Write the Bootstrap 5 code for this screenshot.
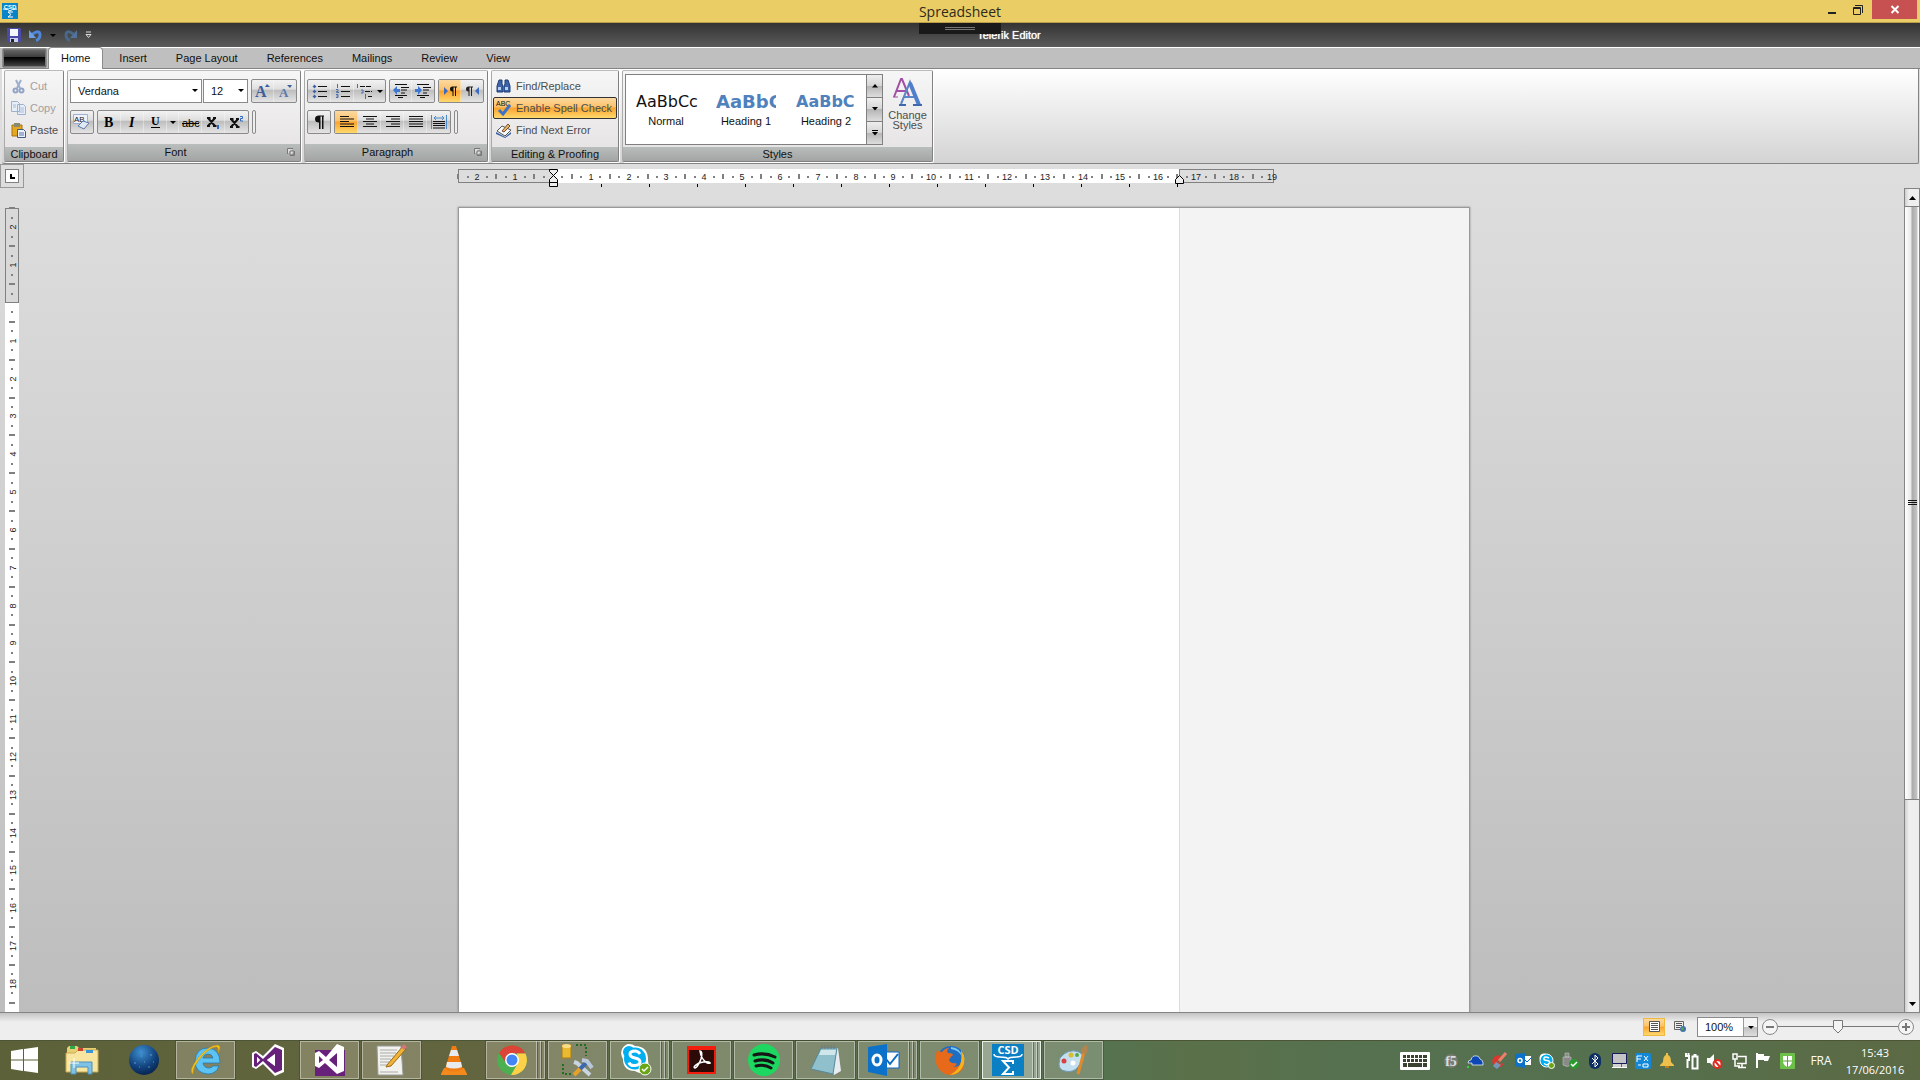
<!DOCTYPE html>
<html lang="en">
<head>
<meta charset="utf-8">
<meta name="viewport" content="width=device-width, initial-scale=1">
<title>Spreadsheet</title>
<link href="https://cdn.jsdelivr.net/npm/bootstrap@5.3.0/dist/css/bootstrap.min.css" rel="stylesheet">
<style>
  body { height: 100vh; overflow: hidden; font: 11px/16px "Liberation Sans", Arial, sans-serif; color: #111; background: #ddd; }
  body > * { flex-shrink: 0; }
  button { font: inherit; color: inherit; background: none; border: 0; padding: 0; }
  svg { display: block; flex: none; overflow: visible; }

  /* window title */
  .win-title { height: 23px; background: #ebcd66; border-bottom: 1px solid #b99d4a; }
  .win-title h1 { font: 14px/23px "Open Sans", sans-serif; color: #2e2a1c; margin: 0; }
  .win-icon { left: 2px; top: 3px; }
  .win-ctl { top: 0; right: 3px; height: 19px; }
  .win-ctl button { width: 26px; height: 19px; display: flex; align-items: center; justify-content: center; }
  .win-ctl .x-btn { width: 45px; background: #c75050; margin-left: 1px; }
  .pull-tab { top: 23px; left: 50%; width: 82px; height: 11px; background: #1a1a1a; transform: translateX(-50%); z-index: 5; }
  .pull-tab::after { content: ""; display: block; width: 30px; height: 3px; margin: 4px auto 0; border: solid #777; border-width: 1px 0; }

  /* quick access */
  .quick { height: 25px; background: linear-gradient(#333, #5c5c5c); border-bottom: 1px solid #fff; padding-left: 7px; }
  .quick .doc-name { color: #fff; left: 0; right: 0; padding-left: 98px; text-shadow: 0 0 1px #fff; }

  /* tabs */
  .tabs { height: 21px; background: #bfbfbf; border-bottom: 1px solid #848484; padding-left: 2px; }
  .app-btn { width: 45px; height: 20px; margin-right: 2px; border: 1px solid #8f8f8f; border-radius: 2px; outline: 1px solid #777; outline-offset: -2px; background: linear-gradient(#6b6b6b 0, #3c3c3c 45%, #000 46%, #111 60%, #4a4a4a 100%); }
  .tabs .nav-link { color: #111; padding: 2px 12px 0; height: 20px; margin-right: 5px; line-height: 16px; }
  .tabs .nav-link.active { height: 21px; background: #fff; border-radius: 3px 3px 0 0; box-shadow: 0 0 0 1px #8c8c8c; clip-path: inset(-1px -1px 0 -1px); }

  /* ribbon */
  .ribbon { height: 95px; margin: 0 1px 0 2px; padding: 1px 0 1px 2px; gap: 2px; border: solid #848484; border-width: 0 1px 1px 0; background: linear-gradient(#fff, #d3d3d3); border-radius: 0 0 2px 2px; }
  .grp { height: 92px; border: 1px solid #aaa; border-color: #bbb #808080 #808080 #aaa; border-radius: 2px; box-shadow: 1px 1px 0 #fff; background: linear-gradient(#f6f6f6, #e4e1e2); margin-right: 1px; }
  .g-clip { width: 60px; } .g-font { width: 234px; } .g-para { width: 184px; } .g-proof { width: 128px; } .g-styles { width: 311px; }
  .grp footer { height: 17px; line-height: 17px; background: linear-gradient(#b9bdbb, #a2a5a3); text-align: center; }
  .grp footer.slim { height: 14px; line-height: 14px; }
  .grp footer.has-dialog { padding-right: 17px; }
  .grp footer button { right: 5px; top: 4px; }
  .two-rows { padding: 8px 2px 0 2px; gap: 7px; }
  .tools { gap: 3px; }
  .strip { height: 24px; border: 1px solid #8a8a8a; border-radius: 2px; display: flex; background: linear-gradient(#f2f2f2 0, #dedede 42%, #bdbdbd 46%, #e4e4e4 100%); }
  .strip button { width: 23px; height: 22px; display: flex; align-items: center; justify-content: center; }
  .strip button + button { box-shadow: -1px 0 0 rgba(255,255,255,.35); }
  .strip .wide { width: 31px; }
  .strip .thin { width: 12px; }
  .strip.mono button { width: 22px; }
  .lit { background: linear-gradient(#fbd9a0 0, #fcc26a 45%, #fba32e 50%, #fed86e 100%); }
  .grip { width: 4px; height: 24px; border: 1px solid #8a8a8a; border-radius: 2px; background: #eee; }
  .combo { position: relative; height: 24px; }
  .combo select { width: 100%; height: 100%; appearance: none; border: 1px solid #8a8a8a; border-radius: 0; background: #fff; font: inherit; color: #111; padding: 0 0 0 7px; }
  .combo::after, .tri { content: ""; border: solid transparent; border-width: 3px 3px 0; border-top-color: #000; width: 0; height: 0; }
  .combo::after { position: absolute; right: 4px; top: 10px; pointer-events: none; }
  .combos { gap: 1px; }
  .w-face { width: 132px; } .w-size { width: 45px; }
  .row-btn { height: 22px; display: flex; align-items: center; color: #4d4d4d; text-align: left; border: 1px solid transparent; border-radius: 2px; white-space: nowrap; gap: 5px; }
  .row-btn:disabled { color: #a0a0a0; }
  .row-btn.lit { border-color: #333; }
  .g-clip .row-btn { padding-left: 5px; gap: 4px; }
  .g-proof .row-btn { padding-left: 2px; width: 124px; }

  .styles-body { padding: 3px 0 0 2px; }
  .gallery { height: 71px; border: 1px solid #808080; background: #fff; }
  .gallery .swatch { width: 80px; height: 69px; padding: 0 10px; text-align: center; overflow: hidden; }
  .swatch span { display: block; height: 22px; line-height: 22px; white-space: nowrap; font-family: "DejaVu Sans", sans-serif; color: #4f81bd; text-align: left; }
  .swatch .nm { display: block; font-weight: 400; }
  .swatch .s-body { color: #111; font-size: 16px; }
  .swatch .s-h1 { font-weight: 700; font-size: 18px; overflow: hidden; }
  .swatch .s-h2 { font-weight: 700; font-size: 16px; }
  .gal-nav button { width: 16px; flex: 1; display: flex; align-items: center; justify-content: center; border: solid #808080; border-width: 0 0 1px 1px; background: linear-gradient(#eee, #d5d5d5 48%, #b5b5b5 50%, #ddd); }
  .gal-nav button:last-child { border-bottom: 0; }
  .change { width: 49px; padding-top: 4px; line-height: 10px; color: #4d4d4d; }

  /* document */
  .work { flex: 1 1 0; background: linear-gradient(#dedede, #bdbdbd); border-bottom: 1px solid #848484; min-height: 0; }
  .corner { width: 24px; height: 24px; border: 1px solid #999; padding: 4px; }
  .corner i { display: block; width: 14px; height: 14px; border: 1px solid #808080; background: #fff; padding: 4px 0 0 4px; }
  .corner i::before { content: ""; display: block; width: 5px; height: 5px; border: solid #000; border-width: 0 0 2px 2px; }
  .bar-gap { width: 16px; }
  .sheet-w { width: 1012px; flex: none; }
  .v-ruler { width: 24px; overflow: hidden; padding: 20px 0 0 5px; }
  .sheet { border: solid #999; border-width: 1px 1px 0; background: #fff; box-shadow: 0 0 2px #888; margin-top: 19px; }
  .sheet-side { width: 290px; background: #f3f3f3; border-left: 1px solid #ddd; }
  .ruler text { font: 9px "Liberation Sans", Arial, sans-serif; fill: #222; text-anchor: middle; }
  .scroll { width: 16px; background: linear-gradient(90deg, #d0d0d0, #efefef 4px); border: solid #848484; border-width: 1px 1px 0; }
  .scroll button { height: 17px; display: flex; align-items: center; justify-content: center; }
  .thumb { flex: 593 0 0; border: solid #808080; border-width: 1px 0; background: linear-gradient(90deg, #fff 0, #e8e8e8 6px, #aaa 7px, #c5c5c5 12px, #fff 13px); }
  .thumb svg { margin: auto; }
  .rest { flex: 196 0 0; }

  /* status bar */
  .status { height: 27px; background: linear-gradient(#c4c4c4, #eee 9px); padding-right: 6px; }
  .view-btns { gap: 4px; margin-right: 6px; }
  .view-btn { width: 22px; height: 18px; display: flex; align-items: center; justify-content: center; }
  .view-btn.lit { border: 1px solid #f0b83c; }
  .zoom-box { width: 61px; height: 20px; }
  .zoom-box::before { content: ""; position: absolute; right: 1px; top: 1px; width: 14px; height: 18px; border-left: 1px solid #999; background: linear-gradient(#f5f5f5 48%, #c0c0c0 50%, #ddd); pointer-events: none; }
  .zoom-box::after { top: 9px; }
  .slide { appearance: none; width: 120px; height: 16px; margin: 0; background: linear-gradient(#777, #777) center/100% 1px no-repeat; }
  .slide::-webkit-slider-thumb { appearance: none; width: 10px; height: 14px; background: url("data:image/svg+xml,%3Csvg xmlns='http://www.w3.org/2000/svg' width='10' height='14'%3E%3Cpath d='M.5 .5h9v8L5 13 .5 8.500z' fill='%23f4f4f4' stroke='%23777'/%3E%3C/svg%3E") no-repeat; }

  /* taskbar */
  .task { height: 40px; border-top: 1px solid #4c5636; color: #fff; background: linear-gradient(90deg, #5c6139 0, #61653e 18%, #62653f 26%, #5b6c49 34%, #5a6f4e 50%, #557351 57%, #5a7049 62%, #567150 70%, #55704e 84%, #5c6a44 100%); }
  .task a, .task .start { height: 38px; width: 59px; display: flex; align-items: center; justify-content: center; color: #fff; text-decoration: none; }
  .task .start { width: 49px; }
  .apps { gap: 3px; padding-left: 3px; }
  .apps .run { border: 1px solid rgba(255,255,255,.4); background: rgba(235,225,210,.25); box-shadow: 0 0 0 1px rgba(40,50,25,.3); }
  .apps .multi { padding-right: 8px; background-image: linear-gradient(90deg, transparent 49px, rgba(255,255,255,.45) 49px 50px, rgba(50,60,30,.5) 50px 51px, transparent 51px 53px, rgba(255,255,255,.45) 53px 54px, rgba(50,60,30,.5) 54px 55px, transparent 55px); }
  .apps .now { background-color: rgba(255,255,255,.38); border-color: #e9eee6; }
  .tray { font: 11px/17px "Open Sans", sans-serif; padding-right: 13px; }
  .tray .cell { width: 24px; display: flex; justify-content: center; }
  .tray .kb { width: 30px; margin-right: 9px; }
  .tray .lang { width: 44px; text-align: center; font-size: 12px; }
  .tray .clock { width: 64px; text-align: center; }
</style>
</head>
<body class="d-flex flex-column m-0">

<header class="win-title position-relative text-center">
  <svg class="win-icon position-absolute" width="16" height="16"><rect width="16" height="16" fill="#0a84c8"/><text x="8" y="5.500" font-family="Liberation Sans" font-size="6" font-weight="700" fill="#fff" text-anchor="middle">CSD</text><path d="M1 6q6 0 7 2 1-2 7-2M11 9H6l3 2.500L6 14h5" stroke="#fff" fill="none"/></svg>
  <h1>Spreadsheet</h1>
  <div class="win-ctl position-absolute d-flex">
    <button aria-label="Minimize"><svg width="8" height="8"><path d="M0 7h8" stroke="#222" stroke-width="2"/></svg></button>
    <button aria-label="Restore"><svg width="10" height="10"><path d="M.5 2.500h7v7h-7zM.5 3.500h7M2 .5h7.500V8" stroke="#222" fill="none"/></svg></button>
    <button aria-label="Close" class="x-btn"><svg width="8" height="7"><path d="M.5 0l7 7m0-7l-7 7" stroke="#fff" stroke-width="2"/></svg></button>
  </div>
</header>
<div class="pull-tab position-absolute"></div>

<div class="quick d-flex align-items-center position-relative">
  <div class="doc-name position-absolute text-center">Telerik Editor</div>
  <button aria-label="Save" class="position-relative"><svg width="14" height="14"><path d="M0 0h13l1 1v13H0z" fill="#4a4aa8"/><path d="M3 1h8v7H3z" fill="#f4f6ff"/><path d="M3 10h8v4H3z" fill="#c9cdf0"/><path d="M4 11h3v3H4z" fill="#222"/></svg></button>
  <button aria-label="Undo" class="position-relative ms-2"><svg width="13" height="13"><path d="M3 5.500Q11 0 11 6q0 4-4 5.500" stroke="#4f86d8" stroke-width="3" fill="none"/><path d="M0 1v8h7z" fill="#6d9fe6"/></svg></button>
  <button aria-label="Undo list" class="position-relative tri ms-2"></button>
  <button aria-label="Redo" class="position-relative ms-2"><svg width="13" height="13"><path d="M10 5.500Q2 0 2 6q0 4 4 5.500" stroke="#496788" stroke-width="3" fill="none"/><path d="M13 1v8H6z" fill="#51739b"/></svg></button>
  <button aria-label="Customize" class="position-relative ms-2"><svg width="7" height="8"><path d="M1 1h5M1 3.500h5L3.500 6.500z" stroke="#ddd" fill="none"/></svg></button>
</div>

<nav class="tabs nav flex-nowrap">
  <button class="app-btn" aria-label="Application menu"></button>
  <a class="nav-link active" href="#">Home</a><a class="nav-link" href="#">Insert</a><a class="nav-link" href="#">Page Layout</a><a class="nav-link" href="#">References</a><a class="nav-link" href="#">Mailings</a><a class="nav-link" href="#">Review</a><a class="nav-link" href="#">View</a>
</nav>

<section class="ribbon d-flex">
  <div class="grp g-clip d-flex flex-column">
    <div class="flex-fill d-flex flex-column pt-1">
      <button class="row-btn" disabled><svg width="15" height="15"><path d="M5 1l4 8M10 1L6 9" stroke="#9fb0cc" stroke-width="2"/><circle cx="4.500" cy="11.500" r="2" stroke="#92a5c8" stroke-width="2" fill="none"/><circle cx="10.500" cy="11.500" r="2" stroke="#92a5c8" stroke-width="2" fill="none"/></svg>Cut</button>
      <button class="row-btn" disabled><svg width="15" height="14"><path d="M.5.5h6l2 2v8h-8zM6.500 3.500h6l2 2v8h-8z" fill="#e8eef8" stroke="#9fb0cc"/><path d="M2 4h3M2 6h3M8 7h5M8 9h5M8 11h5" stroke="#a9bbd9"/></svg>Copy</button>
      <button class="row-btn"><svg width="15" height="15"><path d="M1 2h10v11H1z" fill="#e6a91e" stroke="#a87411"/><path d="M3 0h6v4H3z" fill="#8a8a72"/><path d="M6.500 6.500h6l2 2v6h-8z" fill="#eaf0fa" stroke="#46597e"/><path d="M8 10h5M8 12h5" stroke="#5b73a4"/></svg>Paste</button>
    </div>
    <footer class="slim">Clipboard</footer>
  </div>

  <div class="grp g-font d-flex flex-column">
    <div class="two-rows flex-fill d-flex flex-column">
      <div class="tools d-flex">
        <div class="combos d-flex">
          <div class="combo w-face"><select aria-label="Font"><option>Verdana</option></select></div>
          <div class="combo w-size"><select aria-label="Font size"><option>12</option></select></div>
        </div>
        <div class="strip mono">
          <button aria-label="Grow font"><svg width="15" height="14"><text x="-1" y="13" font-family="Liberation Serif" font-weight="700" font-size="16" fill="#3f5f9c">A</text><path d="M9 3l2-3 3 3z" fill="#3f5f9c"/></svg></button>
          <button aria-label="Shrink font"><svg width="15" height="14"><text x="1" y="13" font-family="Liberation Serif" font-weight="700" font-size="13" fill="#5a78ae">A</text><path d="M9 1h5l-2 3z" fill="#3f5f9c"/></svg></button>
        </div>
      </div>
      <div class="tools d-flex">
        <div class="strip mono"><button aria-label="Clear formatting"><svg width="18" height="17"><path d="M.5.5h14v9H.5z" fill="#eef3fb" stroke="#9bb0d3"/><text x="1" y="8" font-family="Liberation Sans" font-size="8" fill="#222">AB</text><path d="M5 12l5-5 6 2-5 6z" fill="#dfe8f5" stroke="#5b77a8"/></svg></button></div>
        <div class="strip">
          <button aria-label="Bold"><svg width="11" height="11"><text x="0" y="10" font-family="Liberation Serif" font-weight="700" font-size="14">B</text></svg></button>
          <button aria-label="Italic"><svg width="11" height="11"><text x="2" y="10" font-family="Liberation Serif" font-weight="700" font-style="italic" font-size="14">I</text></svg></button>
          <button aria-label="Underline"><svg width="11" height="12"><text x="1" y="9" font-family="Liberation Serif" font-weight="700" font-size="12">U</text><path d="M1 11.500h9" stroke="#000"/></svg></button>
          <button class="thin" aria-label="Underline style"><i class="tri"></i></button>
          <button aria-label="Strikethrough"><svg width="17" height="11"><text x="0" y="10" font-family="Liberation Sans" font-size="11">abc</text><path d="M0 6.500h17" stroke="#000"/></svg></button>
          <button aria-label="Subscript"><svg width="13" height="12"><path d="M1 2l7 8M8 2l-7 8M0 2h3.500M6 2h3M0 10h3M6 10h3.500" stroke="#111" stroke-width="2"/><path d="M10 9h2v4h-2z" fill="#2d6bc4"/></svg></button>
          <button aria-label="Superscript"><svg width="13" height="12"><path d="M1 3l7 8M8 3l-7 8M0 3h3.500M6 3h3M0 11h3M6 11h3.500" stroke="#111" stroke-width="2"/><path d="M10 .5h2.500v2h-2v2.500h2.500" fill="none" stroke="#2d6bc4"/></svg></button>
        </div>
        <div class="grip"></div>
      </div>
    </div>
    <footer class="has-dialog position-relative">Font<button class="position-absolute" aria-label="Font dialog"><svg width="8" height="8"><path d="M.5 6V.5H6M3 7.500h4.500V3M3 3h4v4H3z" stroke="#777" fill="#ddd"/></svg></button></footer>
  </div>

  <div class="grp g-para d-flex flex-column">
    <div class="two-rows flex-fill d-flex flex-column">
      <div class="tools d-flex">
        <div class="strip">
          <button aria-label="Bullets"><svg width="14" height="14"><path d="M5 2.500h9M5 7.500h9M5 12.500h9" stroke="#111"/><path d="M0 2h3v1H0zM1 1h1v3H1zM0 7h3v1H0zM1 6h1v3H1zM0 12h3v1H0zM1 11h1v3H1z" fill="#3f62a8" stroke="#3f62a8" stroke-width=".4"/></svg></button>
          <button aria-label="Numbering"><svg width="14" height="14"><path d="M5 2.500h9M5 7.500h9M5 12.500h9" stroke="#111"/><path d="M1.500 0v4M0 5.500h2v2H.5v1h2.500M0 10.500h2v3H0M.5 12H2" stroke="#4a6ea9" fill="none"/></svg></button>
          <button class="wide" aria-label="Multilevel list"><svg width="17" height="15"><path d="M4 2.500h12M9 7.500h7M12 12.500h4" stroke="#111" stroke-dasharray="5 1"/><path d="M1.500 0v4M5 6h2v3H5M9.500 10v5" stroke="#4a6ea9" fill="none"/></svg><i class="tri ms-1"></i></button>
        </div>
        <div class="strip mono">
          <button aria-label="Decrease indent"><svg width="16" height="14"><path d="M2 .5h12M8 3.500h8M8 6h6M8 9h4M2 11.500h12M5 13.500h5" stroke="#111"/><path d="M0 6l4-4v3h3v3H4v3z" fill="#3c78d0"/></svg></button>
          <button aria-label="Increase indent"><svg width="16" height="14"><path d="M2 .5h12M8 3.500h8M8 6h6M8 9h4M2 11.500h12M5 13.500h5" stroke="#111"/><path d="M7 6L3 2v3H0v3h3v3z" fill="#3c78d0"/></svg></button>
        </div>
        <div class="strip mono">
          <button class="lit" aria-label="Left to right"><svg width="13" height="10"><path d="M0 1l4 4-4 4z" fill="#3c6cc0"/><path d="M13 .5H8.500Q6 .5 6 3t2.500 2.500V10h1V1.500H11V10h1V1.500h1z" fill="#111"/></svg></button>
          <button aria-label="Right to left"><svg width="13" height="10"><path d="M13 1L9 5l4 4z" fill="#3c6cc0"/><path d="M7 .5H2.500Q0 .5 0 3t2.500 2.500V10h1V1.500H5V10h1V1.500h1z" fill="#222"/></svg></button>
        </div>
      </div>
      <div class="tools d-flex">
        <div class="strip mono"><button aria-label="Show marks"><svg width="9" height="14"><path d="M9 .5H4Q0 .5 0 4t4 3.500V14h1.500V1.500H7V14h1.500V1.500H9z" fill="#111"/></svg></button></div>
        <div class="strip">
          <button class="lit" aria-label="Align left"><svg width="14" height="12"><path d="M0 .5h9M0 3h14M0 5.500h9M0 8h14M0 10.500h14" stroke="#111"/></svg></button>
          <button aria-label="Center"><svg width="14" height="12"><path d="M0 .5h14M3 3h8M0 5.500h14M3 8h8M0 10.500h14" stroke="#111"/></svg></button>
          <button aria-label="Align right"><svg width="14" height="12"><path d="M0 .5h14M5 3h9M0 5.500h14M5 8h9M0 10.500h14" stroke="#111"/></svg></button>
          <button aria-label="Justify"><svg width="14" height="12"><path d="M0 .5h14M0 3h14M0 5.500h14M0 8h14M0 10.500h14" stroke="#111"/></svg></button>
          <button aria-label="Line spacing"><svg width="16" height="14"><path d="M.5 0v14M15.500 0v14M3 3h10M5 1L3 3l2 2M11 1l2 2-2 2" stroke="#4a8ac8" fill="none"/><path d="M2 6.500h12M2 8.500h12M2 10.500h12M2 13h12" stroke="#111"/></svg></button>
        </div>
        <div class="grip"></div>
      </div>
    </div>
    <footer class="has-dialog position-relative">Paragraph<button class="position-absolute" aria-label="Paragraph dialog"><svg width="8" height="8"><path d="M.5 6V.5H6M3 7.500h4.500V3M3 3h4v4H3z" stroke="#777" fill="#ddd"/></svg></button></footer>
  </div>

  <div class="grp g-proof d-flex flex-column">
    <div class="flex-fill d-flex flex-column align-items-center pt-1">
      <button class="row-btn"><svg width="15" height="14"><path d="M3 1h3v4l1 2v6H1V7zM9 1h3l2 6v6H8V7l1-2z" fill="#3c64a8" stroke="#213f78"/><path d="M2 8h3v3H2zM9 8h3v3H9z" fill="#b5d0f2"/></svg>Find/Replace</button>
      <button class="row-btn lit"><svg width="15" height="16"><text x="0" y="6" font-family="Liberation Sans" font-size="7" fill="#111">ABC</text><path d="M3 10l4 4 7-9" stroke="#3f72c4" stroke-width="3" fill="none"/></svg>Enable Spell Check</button>
      <button class="row-btn"><svg width="15" height="15"><path d="M1 8l5-5 9 4-6 6z" fill="#f5f8fc" stroke="#555"/><path d="M0 9l9 5 6-5v2l-6 4-9-4z" fill="#3c64a8"/><path d="M6 8l6-7 2 2-6 6z" fill="#e8b868" stroke="#7a4b28"/></svg>Find Next Error</button>
    </div>
    <footer class="slim">Editing &amp; Proofing</footer>
  </div>

  <div class="grp g-styles d-flex flex-column">
    <div class="styles-body flex-fill d-flex">
      <div class="gallery d-flex">
        <button class="swatch"><span class="s-body">AaBbCc</span><b class="nm">Normal</b></button>
        <button class="swatch"><span class="s-h1">AaBbC</span><b class="nm">Heading 1</b></button>
        <button class="swatch"><span class="s-h2">AaBbC</span><b class="nm">Heading 2</b></button>
        <div class="gal-nav d-flex flex-column">
          <button aria-label="Previous styles"><svg width="6" height="4"><path d="M0 3.500L3 0l3 3.500z"/></svg></button>
          <button aria-label="Next styles"><svg width="6" height="4"><path d="M0 0h6L3 3.500z"/></svg></button>
          <button aria-label="More styles"><svg width="6" height="6"><path d="M0 0h6v1H0zM0 2h6L3 5.500z"/></svg></button>
        </div>
      </div>
      <button class="change d-flex flex-column align-items-center justify-content-start"><svg class="mb-1" width="29" height="28"><path d="M1 19L8 1h1l7 17M4 13h9" stroke="#a04fa5" stroke-width="2" fill="none"/><path d="M0 19h5" stroke="#a04fa5"/><path d="M8 26L17 4l9 22M11 19h12" stroke="#5b86c8" stroke-width="2" fill="none"/><path d="M17 5l9 22" stroke="#4f7fca" stroke-width="4"/><path d="M6 27h7M20 27h9" stroke="#3f69ae" stroke-width="2"/></svg>Change<br>Styles</button>
    </div>
    <footer class="slim">Styles</footer>
  </div>
</section>

<main class="work d-flex flex-column">
  <div class="d-flex">
    <div class="corner"><i></i></div>
    <div class="flex-fill d-flex justify-content-center">
      <div class="sheet-w pt-1"><svg id="hRuler" class="ruler" width="820" height="20"></svg></div>
    </div>
    <div class="bar-gap"></div>
  </div>
  <div class="flex-fill d-flex overflow-hidden">
    <div class="v-ruler"><svg id="vRuler" class="ruler" width="14" height="100%"></svg></div>
    <div class="flex-fill d-flex justify-content-center">
      <div class="sheet sheet-w d-flex" contenteditable="true"><div class="flex-fill"></div><div class="sheet-side"></div></div>
    </div>
    <div class="scroll d-flex flex-column">
      <button aria-label="Scroll up"><svg width="7" height="4"><path d="M0 4l3.500-4L7 4z"/></svg></button>
      <div class="thumb d-flex"><svg width="9" height="5"><path d="M0 .5h9M0 2.500h9M0 4.500h9" stroke="#111"/></svg></div>
      <div class="rest"></div>
      <button aria-label="Scroll down"><svg width="7" height="4"><path d="M0 0h7L3.500 4z"/></svg></button>
    </div>
  </div>
</main>

<div class="status d-flex align-items-center justify-content-end">
  <div class="view-btns d-flex">
    <button class="view-btn lit" aria-label="Print layout"><svg width="11" height="11"><path d="M.5.5h10v10H.5z" fill="#fff" stroke="#555"/><path d="M2 2.500h7M2 4.500h7M2 6.500h7M2 8.500h7" stroke="#555"/></svg></button>
    <button class="view-btn" aria-label="Web layout"><svg width="12" height="11"><path d="M.5.5h9v8h-9z" fill="#eee" stroke="#666"/><path d="M2 2.500h6M2 4.500h6M2 6.500h4" stroke="#555"/><circle cx="9" cy="8" r="3" fill="#3c72b0"/><path d="M7 7l2-1 1 2-2 2z" fill="#5aa050"/></svg></button>
  </div>
  <div class="combo zoom-box me-1"><select aria-label="Zoom"><option>100%</option></select></div>
  <button aria-label="Zoom out"><svg width="16" height="16"><circle cx="8" cy="8" r="7.500" fill="#f5f5f5" stroke="#888"/><path d="M4 8h8" stroke="#777" stroke-width="2"/></svg></button>
  <input type="range" class="slide" aria-label="Zoom level" min="0" max="100" value="50">
  <button aria-label="Zoom in"><svg width="16" height="16"><circle cx="8" cy="8" r="7.500" fill="#f5f5f5" stroke="#888"/><path d="M4 8h8M8 4v8" stroke="#777" stroke-width="2"/></svg></button>
</div>

<footer class="task d-flex">
  <button class="start" aria-label="Start"><svg width="27" height="26"><path d="M0 4l12-2v10.500H0zM13 2l14-2v12.500H13zM0 13.500h12V24L0 22zM13 13.500h14V26l-14-2z" fill="#fff"/></svg></button>
  <div class="apps d-flex">
    <a href="#" aria-label="Explorer"><svg width="32" height="30"><path d="M1 3l2-2h8l2 2h17v24H1z" fill="#e9cf74"/><path d="M0 8h9l3-3h20v22H0z" fill="#f7e5a0" stroke="#c9aa55"/><path d="M4 1h5v3H4z" fill="#2fa84a"/><path d="M12 3h5v3h-5z" fill="#c9452f"/><path d="M20 5h7v3h-7z" fill="#3a95d6"/><path d="M5 29V17h21v12h-4v-7H10v7z" fill="#7fc2e4" stroke="#4a92bf"/><path d="M8 13v10M3 18h10" stroke="#fff"/></svg></a>
    <a href="#" aria-label="Browser"><svg width="30" height="30"><defs><radialGradient id="gl" cx=".4" cy=".25" r=".8"><stop stop-color="#3f8fd0"/><stop offset=".6" stop-color="#12447f"/><stop offset="1" stop-color="#06204a"/></radialGradient></defs><circle cx="15" cy="15" r="15" fill="url(#gl)"/><path d="M5 18h2m3 4h1m4-5h1m5-7h2m-4 12h2m3-5h1m-13-6h1" stroke="#8fc4ec" stroke-opacity=".6"/></svg></a>
    <a href="#" class="run" aria-label="Internet Explorer"><svg width="30" height="30"><path d="M29 18H12q1 5 6 5 3 0 4-2h6q-3 8-11 8Q4 28 4 16 5 3 17 3q12 1 12 15zM12 13h10q-1-4-5-4-4 0-5 4z" fill="#5cc3f2" stroke="#1877b8" stroke-width=".7"/><path d="M2 29Q-3 26 7 13 18 0 27 0q4 1 0 8 1-5-1-6-5-1-14 8Q1 22 2 29z" fill="#f6c51d" stroke="#c48d0c" stroke-width=".5"/></svg></a>
    <a href="#" aria-label="Visual Studio"><svg width="32" height="32"><path d="M0 9l4-2 7 5L23 0l9 4v24l-9 4-12-12-7 5-4-2z" fill="#fff"/><path d="M2 10l2-1 7 6L23 3l7 3v20l-7 3-12-12-7 6-2-1zm3 3v6l3-3zm18-3l-8 6 8 6z" fill="#68217a"/><path d="M23 10l-8 6 8 6zM5 13v6l3-3z" fill="#fff"/></svg></a>
    <a href="#" class="run" aria-label="Visual Studio"><svg width="30" height="32"><path d="M0 6h30v26H0z" fill="#68217a"/><path d="M0 9l4-2 7 6L22 0l7 3v24l-7 3-12-11-6 5-4-2z" fill="#fff"/><path d="M22 9l-8 7 8 7zM4 12v7l4-3z" fill="#68217a"/></svg></a>
    <a href="#" class="run" aria-label="Text editor"><svg width="30" height="31"><path d="M0 1h24l2 29H1z" fill="#f1f1ee" stroke="#999"/><path d="M3 5h17M3 8h16M3 11h14M3 14h11M3 17h9M3 20h7M3 27h18" stroke="#aaa"/><path d="M10 20L26 1l3 3-15 17-5 1z" fill="#efb33a" stroke="#9a6a17"/><path d="M24 2l3-3 3 3-3 3z" fill="#d77474"/></svg></a>
    <a href="#" aria-label="VLC"><svg width="26" height="30"><path d="M3 23h20l3 6v1H0v-1z" fill="#f58a1c"/><path d="M11 1h4l7 23q-9 5-18 0z" fill="#f07c12"/><path d="M10 5h6l2 6H8zM6 17h14l1 5q-8 3-16 0z" fill="#e7ebef"/></svg></a>
    <a href="#" class="run multi" aria-label="Chrome"><svg width="30" height="30"><circle cx="15" cy="15" r="15" fill="#4caf50"/><path d="M2 8A15 15 0 0 1 28.500 8.500H15L9 18z" fill="#db4437"/><path d="M28.500 8.500A15 15 0 0 1 14 30l7-12-1-9.500z" fill="#fdd049"/><circle cx="15" cy="15" r="7" fill="#fff"/><circle cx="15" cy="15" r="5.500" fill="#4285f4"/></svg></a>
    <a href="#" class="run" aria-label="Admin tools"><svg width="31" height="32"><path d="M0 1h9v13H0z" fill="#e9b932" stroke="#a97c14"/><ellipse cx="4.500" cy="2" rx="4.500" ry="2" fill="#f9dc86"/><path d="M14 1h10v11M1 20v10h10" stroke="#1f6d22" stroke-dasharray="2 2" stroke-width="2" fill="none"/><path d="M12 18l3 1 13 12" stroke="#c9d4e2" stroke-width="4" fill="none"/><path d="M25 18l-7 7" stroke="#3d68b0" stroke-width="4"/><path d="M18 25l-6 6" stroke="#e5a12a" stroke-width="4"/><path d="M20 16l5 1 5 7" stroke="#b9c7da" stroke-width="4" fill="none"/></svg></a>
    <a href="#" class="run multi" aria-label="Skype"><svg width="30" height="32"><path d="M8 0q4 0 6 2 13 0 13 14 2 12-8 13-4-1-5-2Q2 27 2 15-1 10 1 5q3-5 7-5z" fill="#fff"/><circle cx="14" cy="14.500" r="11" fill="#00aff0"/><circle cx="8" cy="8" r="6" fill="#00aff0"/><path d="M19 10q-2-3-5-3-5 0-5 3t5 4 5 4-5 3.500-6-3" stroke="#fff" stroke-width="3" fill="none"/><circle cx="24" cy="25" r="6" fill="#6aa516" stroke="#fff"/><path d="M21 25l2 2 4-4" stroke="#fff" stroke-width="1.500" fill="none"/></svg></a>
    <a href="#" class="run" aria-label="Acrobat Reader"><svg width="29" height="28"><path d="M0 0h29v28H0z" fill="#f21d0c"/><path d="M2 4h25v22H2z" fill="#2b0a08"/><path d="M13 5q3 0 1 8-3 8-6 9-3-1 4-5 7-2 10-1 3 2-2 1-6-4-7-12z" stroke="#fff" stroke-width="1.500" fill="none"/></svg></a>
    <a href="#" class="run" aria-label="Spotify"><svg width="32" height="32"><circle cx="16" cy="16" r="16" fill="#1ed760"/><path d="M6 11q11-3 21 2M7 17q10-3 18 2M8 22q8-2 15 2" stroke="#151515" stroke-width="3" fill="none" stroke-linecap="round"/></svg></a>
    <a href="#" class="run" aria-label="Notepad"><svg width="30" height="31"><path d="M11 3h16l3 23-7 4z" fill="#e6ecef"/><path d="M10 3h16l-4 26-22-5z" fill="#8fc0cc" stroke="#56899a"/><path d="M10 5h15l-1 5H8z" fill="#cfe6ea"/><path d="M11 0v4m3-4v4m3-4v4m3-4v4m3-4v4" stroke="#777"/></svg></a>
    <a href="#" class="run multi" aria-label="Outlook"><svg width="31" height="32"><path d="M16 8h15v16H16z" fill="#fff" stroke="#0a6ac0"/><path d="M18 15l4 5 8-10" stroke="#0a6ac0" stroke-width="2" fill="none"/><path d="M0 3l19-3v32L0 28z" fill="#0c71c8"/><ellipse cx="9" cy="16" rx="4" ry="5" stroke="#fff" stroke-width="3" fill="none"/></svg></a>
    <a href="#" class="run" aria-label="Firefox"><svg width="30" height="31"><circle cx="16" cy="15" r="14" fill="#1f6ec2"/><path d="M16 2q10 1 11 10-3-7-11-8z" fill="#7cc8f2"/><path d="M2 5q2 2 5 2 3-4 7-4-3 3-1 5 5 0 5 2-3 2-4 5 2 4 7 3 2 2-3 4 9 0 9-10 5 6 0 13-7 7-17 4Q-3 22 2 5z" fill="#e66a1a"/><path d="M26 5q7 9 1 18-4 7-12 7 9-5 11-13 1-6 0-12z" fill="#f5b21a"/></svg></a>
    <a href="#" class="run multi now" aria-label="CSD"><svg width="32" height="32"><path d="M0 0h32v32H0z" fill="#0a7fc4"/><text x="16" y="10" font-family="Open Sans" font-size="11" font-weight="700" fill="#fff" text-anchor="middle">CSD</text><path d="M2 10q0 3 6 3 7 0 8 2 1-2 8-2 6 0 6-3" stroke="#fff" stroke-width="1.500" fill="none"/><path d="M21 20v-3H11l6 6.500-6 6.500h10v-3" stroke="#fff" stroke-width="2" fill="none"/></svg></a>
    <a href="#" class="run" aria-label="Paint"><svg width="31" height="32"><path d="M2 14q8-10 19-6 7 4 3 11-3 1-4 4-5 6-13 4-6-1-6-7z" fill="#c4dff0" stroke="#6b9cbd"/><circle cx="6" cy="17" r="2.500" fill="#d94040"/><circle cx="13" cy="11" r="2.500" fill="#d9bc30"/><circle cx="19" cy="11" r="2" fill="#56a84a"/><circle cx="15" cy="19" r="2.500" fill="#fff"/><path d="M26 8l-6 22" stroke="#e08a2a" stroke-width="3"/><path d="M23 9q0-7 6-8 2 5-1 9z" fill="#b08550"/></svg></a>
  </div>
  <div class="tray d-flex align-items-center ms-auto">
    <span class="kb"><svg width="30" height="18"><rect width="30" height="18" rx="1" fill="#fff"/><path d="M3 3h24v12H3z" fill="#3a4230"/><path d="M3 6.500h24M3 10.500h24M6.500 3v8M10.500 3v8M14.500 3v8M18.500 3v8M22.500 3v8M7.500 11v4M22.500 11v4" stroke="#fff"/></svg></span>
    <span class="cell"><svg width="16" height="16"><circle cx="8" cy="8" r="7" fill="#777b72"/><text x="8" y="13" font-family="Liberation Serif" font-size="14" font-weight="700" fill="#ddd" text-anchor="middle">f5</text></svg></span>
    <span class="cell"><svg width="16" height="14"><path d="M1 9q0-3 3-3 1-5 6-4 2 0 3 3 3 1 3 4v2H5V9z" fill="#0d47b5" stroke="#fff" stroke-width=".7"/><path d="M0 12h2v2H0z" fill="#3bd03b"/></svg></span>
    <span class="cell"><svg width="16" height="16"><path d="M10 3a6 6 0 1 0 3 7l-4 1-2-3z" fill="#d8392e"/><path d="M15 0L8 8" stroke="#e9806b" stroke-width="3"/><path d="M5 9l5 3-4 4-4-3z" fill="#7896b8"/></svg></span>
    <span class="cell"><svg width="16" height="15"><path d="M9 3h7v9H9z" fill="#fff"/><path d="M9 6l3 3 4-4" stroke="#0b6ac0" fill="none"/><path d="M0 1l10-1v15L0 13z" fill="#0c71c8"/><circle cx="5" cy="7.500" r="2" stroke="#fff" stroke-width="1.500" fill="none"/></svg></span>
    <span class="cell"><svg width="16" height="16"><circle cx="5" cy="5" r="4.500" fill="#fff"/><circle cx="7.500" cy="7.500" r="6.500" fill="#00aff0" stroke="#fff"/><path d="M10 5q-4-2-5 0t3 2.500 2 3-5 0" stroke="#fff" stroke-width="1.500" fill="none"/><circle cx="12.500" cy="12.500" r="3" fill="#6aa516" stroke="#fff"/></svg></span>
    <span class="cell"><svg width="16" height="16"><path d="M2 0h4v4H2zM0 4h8v8q-4 3-8 0z" fill="#8a8a8a" stroke="#ccc" stroke-width=".5"/><circle cx="11" cy="11" r="5" fill="#2a9a2e"/><path d="M8 11l2 2 4-4" stroke="#fff" stroke-width="1.500" fill="none"/></svg></span>
    <span class="cell"><svg width="12" height="16"><rect width="12" height="16" rx="6" fill="#0e2f63"/><path d="M3 5l6 6-3 3V2l3 3-6 6" stroke="#fff" fill="none"/></svg></span>
    <span class="cell"><svg width="15" height="15"><path d="M.5.5h14v10H.5z" fill="#c4c4c4" stroke="#18185c"/><path d="M1 11h8v3H1zM10 11h5v3h-5z" fill="#d4d4d4"/><path d="M0 14.500h15" stroke="#fff"/></svg></span>
    <span class="cell"><svg width="16" height="16"><rect width="16" height="16" rx="2" fill="#1387d8"/><path d="M2 3h5M2 6h4M2 3v6M9 3l4 5M13 3L9 8M3 12h3m2-1h5v3H8z" stroke="#fff" fill="none"/></svg></span>
    <span class="cell"><svg width="14" height="15"><path d="M6 0h2v2q3 1 3 7l3 3v1H0v-1l3-3q0-6 3-7z" fill="#ecc04a"/><path d="M5 13h4v2H5z" fill="#b98318"/></svg></span>
    <span class="cell"><svg width="15" height="16"><path d="M1 3h4v4H3.500v8M2 3V0m2.500 3V0M8.500 3.500h5v12h-5zM9.500 2h3" stroke="#fff" stroke-width="2" fill="none"/></svg></span>
    <span class="cell"><svg width="16" height="16"><path d="M0 5h3l4-4v13l-4-4H0z" fill="#fff"/><circle cx="10.500" cy="11" r="4" fill="#fff" stroke="#e02b20" stroke-width="2"/><path d="M8 8l5 6" stroke="#e02b20" stroke-width="2"/></svg></span>
    <span class="cell"><svg width="15" height="15"><path d="M6 3.500h8v7H5M10 11v3M6 14.500h8M1 1h4v5H1zM3 6v7h5" stroke="#fff" stroke-width="1.500" fill="none"/></svg></span>
    <span class="cell"><svg width="15" height="15"><path d="M1 0v15" stroke="#fff" stroke-width="2"/><path d="M2 1h6v2h6l-2 5H8V7H2z" fill="#fff"/></svg></span>
    <span class="cell"><svg width="15" height="16"><rect width="15" height="16" rx="1" fill="#6cc04a"/><path d="M3 3h9v6q-1 4-4.500 5Q4 13 3 9z" fill="#fff"/><path d="M7.500 3v11M3 8h9" stroke="#5aa03c"/></svg></span>
    <span class="lang">FRA</span>
    <span class="clock">15:43<br>17/06/2016</span>
  </div>
</footer>

<script src="https://cdn.jsdelivr.net/npm/bootstrap@5.3.0/dist/js/bootstrap.bundle.min.js"></script>
<script>
  // One centimetre is 37.83px; marks fall on every quarter.
  const CM = 37.83;
  const rect = (x, y, w, h, fill, extra = '') => `<rect x="${x}" y="${y}" width="${w}" height="${h}" fill="${fill}" ${extra}/>`;

  function marks(zero, first, last, vertical) {
    let out = '';
    for (let k = first; k <= last; k++) {
      const p = Math.round(zero + k * CM / 4);
      if (k % 4 === 0) {
        if (k === 0) continue;
        const n = Math.abs(k / 4);
        out += vertical ? `<text transform="translate(11 ${p}) rotate(-90)">${n}</text>` : `<text x="${p}" y="12">${n}</text>`;
      } else if (k % 2 === 0) {
        out += vertical ? rect(4, p - 1, 6, 2, '#808080') : rect(p - 1, 6, 2, 5, '#808080');
      } else {
        out += vertical ? rect(6, p - 1, 2, 2, '#808080') : rect(p - 1, 8, 2, 2, '#808080');
      }
    }
    return out;
  }

  let h = rect(0, 1, 816, 14, '#fff') + rect(0.5, 1.5, 95, 13, '#ddd', 'stroke="#808080"') + rect(721.5, 1.5, 94, 13, '#ddd', 'stroke="#808080"');
  h += marks(95, -10, 76, false);
  for (let x = 143; x < 722; x += 48) h += rect(x, 16, 1, 3, '#000');
  h += '<path d="M91.500 1.500h8v2l-4 4 4 4v3h-8v-3l4-4-4-4zM91.500 14.500h8v4h-8z" fill="#eee" stroke="#000"/>';
  h += '<path d="M717.500 15.500v-4l4-4 4 4v4z" fill="#eee" stroke="#000"/>';
  document.getElementById('hRuler').innerHTML = h;

  // The vertical ruler is as long as the pane and stops at its last whole mark.
  const pane = document.querySelector('.v-ruler');
  function drawVertical() {
    const len = pane.clientHeight - 20;
    document.getElementById('vRuler').innerHTML =
      rect(0, 0, 14, len, '#fff') + rect(0.5, 0.5, 13, 94, '#d9d9d9', 'stroke="#808080"') +
      marks(95, -10, Math.floor((len - 97) * 4 / CM), true);
  }
  drawVertical();
  addEventListener('resize', drawVertical);
</script>
</body>
</html>
